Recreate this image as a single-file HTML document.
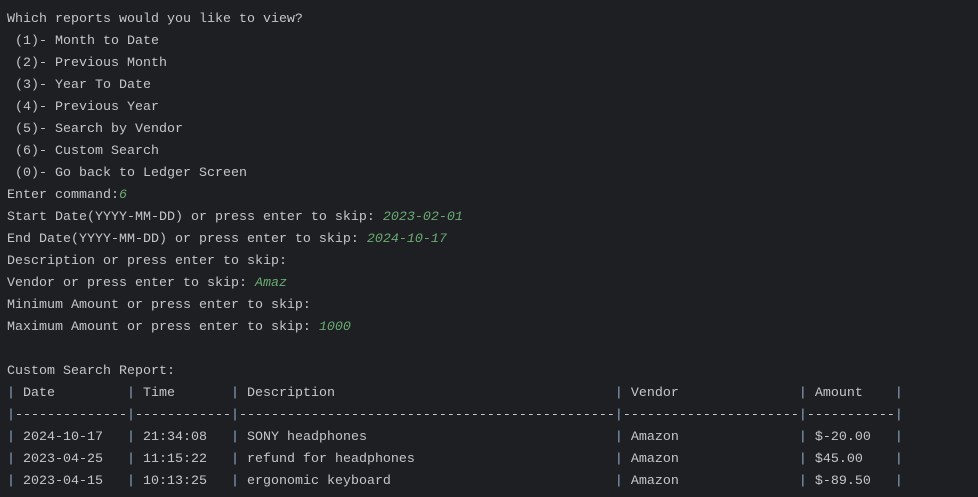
<!DOCTYPE html>
<html><head><meta charset="utf-8"><style>
html,body{margin:0;padding:0;background:#1e1f22;width:978px;height:497px;overflow:hidden}
pre{margin:0;position:absolute;left:7px;top:9px;font-family:"Liberation Mono",monospace;font-size:13.33px;line-height:22px;color:#c4c6cc}
.g{color:#6aab73;font-style:italic}
.p{color:#8fa9c8}
</style></head><body><pre>Which reports would you like to view?
 (1)- Month to Date
 (2)- Previous Month
 (3)- Year To Date
 (4)- Previous Year
 (5)- Search by Vendor
 (6)- Custom Search
 (0)- Go back to Ledger Screen
Enter command:<span class="g">6</span>
Start Date(YYYY-MM-DD) or press enter to skip: <span class="g">2023-02-01</span>
End Date(YYYY-MM-DD) or press enter to skip: <span class="g">2024-10-17</span>
Description or press enter to skip:
Vendor or press enter to skip: <span class="g">Amaz</span>
Minimum Amount or press enter to skip:
Maximum Amount or press enter to skip: <span class="g">1000</span>

Custom Search Report:
<span class="p">|</span> Date         <span class="p">|</span> Time       <span class="p">|</span> Description                                   <span class="p">|</span> Vendor               <span class="p">|</span> Amount    <span class="p">|</span>
<span class="p">|</span>--------------<span class="p">|</span>------------<span class="p">|</span>-----------------------------------------------<span class="p">|</span>----------------------<span class="p">|</span>-----------<span class="p">|</span>
<span class="p">|</span> 2024-10-17   <span class="p">|</span> 21:34:08   <span class="p">|</span> SONY headphones                               <span class="p">|</span> Amazon               <span class="p">|</span> $-20.00   <span class="p">|</span>
<span class="p">|</span> 2023-04-25   <span class="p">|</span> 11:15:22   <span class="p">|</span> refund for headphones                         <span class="p">|</span> Amazon               <span class="p">|</span> $45.00    <span class="p">|</span>
<span class="p">|</span> 2023-04-15   <span class="p">|</span> 10:13:25   <span class="p">|</span> ergonomic keyboard                            <span class="p">|</span> Amazon               <span class="p">|</span> $-89.50   <span class="p">|</span>
</pre></body></html>
